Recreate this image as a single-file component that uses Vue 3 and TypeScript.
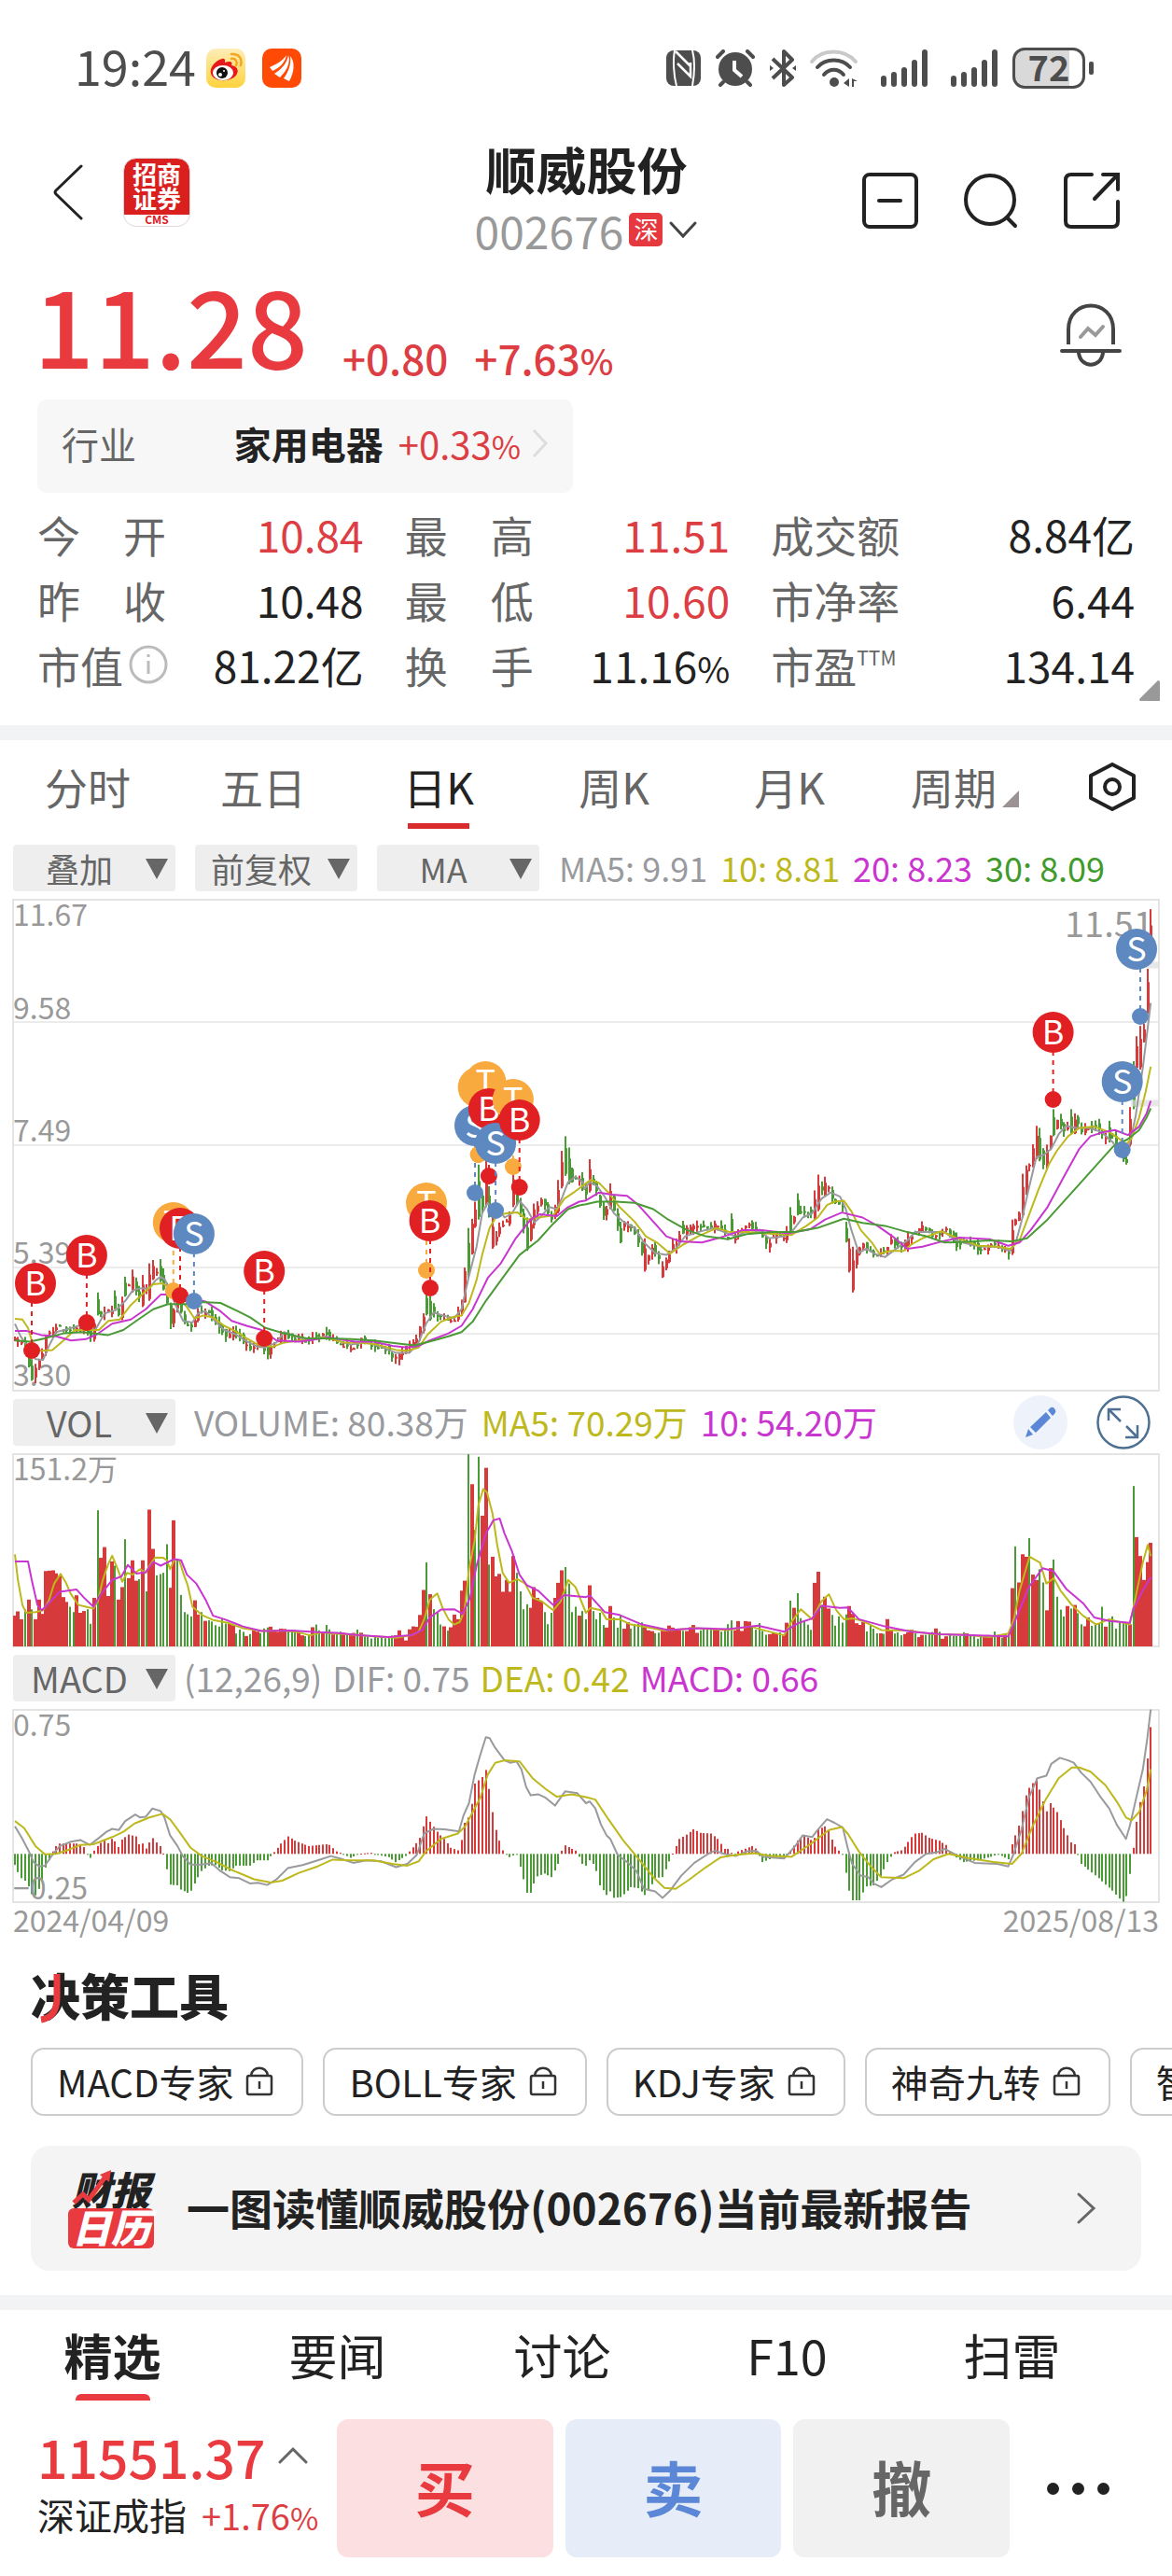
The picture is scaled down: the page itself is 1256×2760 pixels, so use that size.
<script setup lang="ts">
interface Point { x: number; y: number }
interface Bar { x: number; y: number; h: number; up: boolean }
interface Pin { kind: 'B' | 'S' | 'T'; x: number; y: number; dx: number; dy: number }

const COUNT = 329
const HALF = 1568
const GRID = 3136 / 1256
const FIRST = 39
const STEP = 3040 / 328

const colors = {
  gray: '#999a9e', yellow: '#bdb81c', magenta: '#c936cf', green: '#4a9a35', red: '#d63a3a',
}
const pinColors = { B: '#e02022', S: '#5d88c0', T: '#f9aa3f' }

/* Samples come as "x,y" pairs in two pages; the second page starts at HALF. */
function read(first: string, second: string): Point[] {
  const page = (s: string, shift: number) => s.trim().split(/\s+/).map((pair) => {
    const [x, y] = pair.split(',').map(Number)
    return { x: x + shift, y }
  })
  return [...page(first, 0), ...page(second, HALF)]
}
const px = (gx: number) => Math.round((gx / GRID - 14) * 10) / 10
const indexOf = (gx: number) => Math.max(0, Math.min(COUNT - 1, Math.round((gx - FIRST) / STEP)))

function perCandle(points: Point[]): number[] {
  const keys = points.map((p) => ({ i: indexOf(p.x), y: p.y }))
  const out: number[] = []
  let k = 0
  for (let i = 0; i < COUNT; i++) {
    while (k < keys.length - 2 && keys[k + 1].i <= i) k++
    const a = keys[k]
    const b = keys[k + 1]
    const t = b.i === a.i ? 1 : Math.max(0, Math.min(1, (i - a.i) / (b.i - a.i)))
    out.push(a.y + (b.y - a.y) * t)
  }
  return out
}
const noise = (i: number, seed: number) => {
  const v = Math.sin(i * 12.9898 + seed * 78.233) * 43758.5453
  return v - Math.floor(v)
}
/* Whole pixels keep the thin bars crisp. */
const candleX = (i: number) => Math.round(px(FIRST + i * STEP))

const priceY = (gy: number) => gy / 2.24 - 164
const volY = (gy: number) => gy / 2.6133 - 68
const macdY = (gy: number) => gy / 2.6133 - 342

function line(points: Point[], toY: (y: number) => number): string {
  return points.map((p) => `${px(p.x)},${toY(p.y).toFixed(1)}`).join(' ')
}

/* ---- price panel ---- */
const price = perCandle(read(
  '39,1425 60,1430 78,1470 87,1510 95,1490 112,1455 125,1415 150,1390 175,1400 205,1390 225,1395 245,1420 260,1360 285,1355 305,1350 318,1370 330,1330 340,1295 355,1290 375,1320 390,1300 405,1255 425,1265 440,1290 460,1380 475,1330 495,1380 512,1395 530,1360 555,1355 580,1380 605,1412 630,1405 655,1430 672,1445 690,1430 715,1455 735,1430 760,1410 790,1425 830,1420 870,1408 900,1430 940,1445 965,1425 1000,1435 1035,1445 1060,1470 1085,1440 1110,1425 1130,1370 1145,1320 1155,1350 1180,1370 1215,1378 1232,1340 1245,1260 1255,1210 1265,1150 1275,1060 1290,1110 1300,1040 1320,1190 1340,1155 1365,1130 1378,1070 1395,1120 1415,1190 1430,1110 1450,1090 1475,1130 1490,1080 1502,1030 1515,990 1530,1040 1550,1040 1567,1070',
  '10,1030 30,1070 48,1130 65,1080 80,1150 105,1145 125,1155 155,1230 180,1200 205,1250 230,1200 260,1165 290,1150 340,1148 370,1170 400,1180 435,1145 460,1165 480,1195 510,1165 530,1180 550,1140 570,1115 610,1115 625,1060 645,1060 660,1090 685,1105 697,1160 712,1250 725,1210 745,1195 770,1225 800,1210 815,1185 845,1205 870,1170 900,1155 925,1175 960,1160 990,1195 1020,1185 1050,1205 1100,1195 1130,1220 1142,1150 1160,1120 1175,1010 1190,1000 1205,940 1225,1005 1240,930 1260,890 1280,920 1305,895 1330,920 1365,910 1385,935 1405,930 1430,980 1443,1000 1452,900 1465,800 1480,740 1492,690 1501,560 1511,430',
))
const extremes: [number, number, number, boolean][] = [
  [78, 1440, 1490, false], [87, 1470, 1522, false], [262, 1310, 1365, false], [308, 1305, 1350, false], [337, 1272, 1320, false],
  [355, 1255, 1310, true], [382, 1268, 1345, true], [400, 1240, 1330, true], [410, 1232, 1280, true], [429, 1230, 1285, false],
  [438, 1252, 1305, false], [1142, 1305, 1365, false], [1152, 1310, 1378, false], [1253, 1155, 1275, false],
  [1271, 1092, 1155, true], [1280, 1003, 1135, false], [1299, 990, 1105, true], [1308, 1055, 1130, false],
  [1318, 1130, 1205, true], [1373, 1010, 1105, true], [1410, 1130, 1210, false], [1494, 1040, 1120, true],
  [1503, 970, 1060, true], [1513, 935, 1030, false], [1522, 962, 1050, false], [1578, 990, 1070, true],
  [1633, 1048, 1110, true], [1661, 1140, 1192, false], [1725, 1180, 1260, true], [1773, 1235, 1275, true],
  [1828, 1138, 1170, false], [1958, 1120, 1165, false], [2115, 1105, 1170, false], [2133, 1072, 1125, false],
  [2179, 1065, 1135, true], [2189, 1027, 1115, true], [2208, 1032, 1080, true], [2264, 1140, 1190, false], [2273, 1180, 1262, true],
  [2282, 1200, 1310, true], [2708, 1135, 1220, true], [2736, 1025, 1130, true], [2773, 910, 990, true],
  [2782, 915, 995, false], [2818, 870, 935, false], [2866, 870, 930, false], [2875, 880, 930, true], [2968, 898, 950, false],
  [3023, 865, 960, true], [3033, 755, 870, false], [3042, 695, 775, true], [3051, 670, 775, true],
  [3060, 665, 710, true], [3070, 533, 640, true], [3079, 390, 520, true],
]
const fixed = new Map(extremes.map((e) => [indexOf(e[0]), e]))
const candles = price.map((p, i) => {
  const pinned = fixed.get(i)
  const before = i ? price[i - 1] : p + 4
  const drift = (noise(i, 1) - 0.5) * 16
  let open = before + drift
  let close = p + (noise(i, 2) - 0.5) * 12
  let high = Math.min(open, close) - noise(i, 3) * 14
  let low = Math.max(open, close) + noise(i, 4) * 14
  let up = close < open
  if (pinned) {
    high = pinned[1]
    low = pinned[2]
    up = pinned[3]
    const span = low - high
    open = high + span * 0.3
    close = high + span * 0.95
  }
  const top = Math.min(open, close)
  const body = Math.max(4, Math.abs(open - close))
  return {
    x: candleX(i), high: priceY(high), low: priceY(low), top: priceY(top), body: body / 2.24, up,
  }
})

const priceLines = [
  { color: colors.gray, points: line(read(
    '40,1385 55,1415 75,1440 95,1470 115,1472 130,1440 150,1405 180,1398 210,1390 235,1395 255,1400 280,1360 310,1352 335,1330 355,1305 375,1300 400,1300 415,1282 430,1272 442,1280 455,1310 470,1340 490,1378 515,1382 530,1360 550,1355 575,1378 600,1400 630,1410 655,1425 690,1440 710,1442 740,1430 760,1405 790,1415 830,1425 870,1415 900,1425 940,1435 980,1430 1020,1440 1060,1455 1095,1455 1120,1430 1140,1385 1160,1358 1185,1365 1215,1372 1235,1350 1255,1270 1275,1200 1290,1120 1305,1095 1320,1110 1335,1110 1350,1130 1370,1120 1390,1090 1410,1110 1430,1142 1450,1125 1470,1105 1490,1110 1505,1080 1520,1045 1540,1032 1560,1045',
    '-5,1062 10,1045 30,1055 50,1080 75,1120 100,1140 130,1155 155,1190 185,1215 215,1220 240,1205 265,1175 300,1165 340,1155 370,1165 400,1175 440,1160 470,1165 490,1180 530,1175 550,1165 580,1130 605,1120 630,1085 655,1070 680,1080 695,1110 710,1160 730,1215 750,1205 775,1218 800,1225 830,1205 860,1185 880,1165 920,1165 960,1165 990,1185 1030,1195 1060,1200 1100,1200 1135,1210 1150,1190 1165,1140 1185,1060 1205,985 1225,980 1245,965 1265,930 1285,910 1310,915 1345,915 1380,925 1410,950 1430,975 1445,980 1455,950 1470,890 1490,770 1511,615'), priceY) },
  { color: colors.yellow, points: line(read(
    '40,1373 60,1375 75,1395 90,1440 110,1450 140,1448 170,1425 200,1400 240,1400 265,1400 290,1378 320,1375 350,1340 380,1315 410,1290 435,1288 455,1300 475,1320 500,1345 520,1372 545,1365 570,1370 600,1390 630,1403 660,1420 690,1435 730,1440 760,1430 800,1425 870,1418 920,1430 960,1430 1010,1435 1060,1448 1090,1450 1120,1442 1145,1410 1180,1380 1215,1368 1235,1365 1255,1335 1275,1280 1290,1220 1310,1155 1330,1125 1355,1120 1385,1118 1410,1135 1440,1130 1480,1125 1510,1085 1535,1070',
    '0,1048 12,1040 35,1047 60,1070 90,1105 130,1140 160,1175 190,1190 225,1217 260,1195 300,1175 350,1155 385,1165 430,1165 480,1168 550,1172 590,1150 620,1130 645,1100 665,1092 690,1090 710,1115 735,1160 765,1190 785,1217 815,1210 850,1210 870,1195 900,1180 950,1163 990,1178 1050,1198 1100,1200 1135,1205 1160,1185 1185,1125 1210,1065 1240,1000 1260,970 1290,935 1320,915 1360,912 1400,925 1425,940 1445,955 1460,940 1480,890 1497,830 1511,768'), priceY) },
  { color: colors.magenta, points: line(read(
    '40,1402 70,1402 110,1412 150,1415 190,1425 230,1422 260,1410 300,1385 350,1375 390,1350 430,1315 470,1315 510,1325 550,1332 590,1355 620,1378 660,1390 700,1400 740,1425 800,1428 880,1418 950,1428 1000,1428 1050,1438 1090,1442 1120,1438 1150,1425 1200,1408 1235,1390 1265,1350 1305,1275 1340,1240 1380,1180 1420,1135 1445,1122 1490,1127 1520,1105 1550,1092',
    '0,1089 35,1070 70,1075 110,1078 140,1100 180,1140 215,1175 250,1187 310,1190 360,1178 420,1160 470,1160 540,1168 600,1158 640,1135 685,1118 740,1130 780,1150 820,1175 860,1205 900,1200 950,1188 1000,1178 1080,1182 1130,1198 1160,1190 1190,1160 1235,1105 1280,1030 1320,965 1350,935 1385,925 1415,920 1450,932 1480,912 1500,880 1511,850'), priceY) },
  { color: colors.green, points: line(read(
    '40,1425 80,1428 120,1420 170,1408 220,1405 290,1412 330,1400 370,1375 410,1350 450,1338 500,1338 540,1333 590,1335 630,1352 670,1370 710,1395 760,1408 820,1420 880,1420 940,1422 1000,1425 1060,1432 1110,1437 1160,1425 1200,1415 1235,1405 1265,1380 1300,1330 1345,1275 1390,1220 1440,1185 1480,1145 1520,1110 1550,1101',
    '0,1098 30,1092 80,1092 130,1095 180,1110 220,1135 270,1160 320,1175 380,1182 430,1170 500,1165 560,1165 620,1155 690,1133 740,1143 800,1150 860,1165 910,1175 960,1190 1020,1188 1080,1185 1140,1187 1180,1180 1235,1135 1300,1070 1350,1020 1410,960 1450,942 1480,920 1500,890 1511,868'), priceY) },
]

const rawPins: [Pin['kind'], number, number, number, number][] = [
  ['B', 95, 1288, 85, 1450], ['B', 232, 1220, 232, 1382],
  ['T', 464, 1143, 464, 1305], ['B', 482, 1156, 482, 1317], ['S', 519, 1169, 519, 1331],
  ['B', 707, 1259, 707, 1421], ['T', 1141, 1096, 1141, 1257], ['B', 1150, 1138, 1151, 1300],
  ['S', 1271, 910, 1271, 1071], ['T', 1280, 817, 1280, 978], ['T', 1299, 805, 1280, 978],
  ['B', 1308, 870, 1308, 1030], ['T', 1373, 847, 1373, 1008], ['S', 1326, 952, 1326, 1113],
  ['B', 1390, 896, 1390, 1057], ['B', 2818, 685, 2818, 846], ['S', 3003, 804, 3003, 967],
  ['S', 3041, 486, 3051, 647],
]
const pins: Pin[] = rawPins.map(([kind, x, y, dx, dy]) => ({
  kind, x: px(x), y: Math.round(priceY(y)), dx: px(dx), dy: Math.round(priceY(dy)),
}))
const priceTicks = [
  { text: '11.67', y: 28 }, { text: '9.58', y: 128 }, { text: '7.49', y: 259 },
  { text: '5.39', y: 390 }, { text: '3.30', y: 521 },
]

/* ---- volume panel ---- */
const volume = perCandle(read(
  '39,630 48,618 60,640 75,585 90,640 105,585 115,625 122,505 145,503 158,520 168,578 185,605 197,620 205,573 215,622 235,612 243,650 252,580 262,335 271,468 281,438 290,575 299,478 308,490 318,585 327,550 336,416 345,525 355,475 364,532 373,528 382,475 391,562 400,333 410,443 420,517 438,510 447,430 456,552 465,363 475,470 484,572 494,620 512,632 521,587 530,627 540,620 550,645 565,645 585,665 595,640 605,655 625,660 635,678 645,665 660,682 675,672 700,675 725,662 740,678 753,662 780,668 800,678 820,690 845,655 860,680 873,657 890,680 915,678 940,688 957,665 975,688 1010,692 1050,690 1067,675 1085,698 1095,672 1105,657 1115,665 1124,628 1133,558 1142,481 1152,570 1161,612 1171,622 1180,655 1198,668 1207,660 1216,627 1225,640 1234,560 1243,532 1253,178 1262,262 1271,390 1280,185 1290,350 1299,216 1308,487 1318,465 1327,520 1336,513 1345,563 1355,530 1364,563 1373,463 1383,510 1392,562 1401,612 1410,598 1420,608 1429,550 1438,580 1448,590 1457,620 1466,653 1475,622 1485,580 1494,538 1503,503 1513,494 1522,540 1531,620 1541,605 1550,630 1559,617',
  '0,640 10,545 19,617 28,640 38,622 47,653 56,665 65,603 75,635 84,665 93,628 102,668 111,645 120,663 150,650 165,670 185,680 205,668 230,660 245,668 270,678 288,655 300,680 325,660 350,668 375,672 389,643 398,670 408,648 417,668 427,643 436,645 450,668 463,655 475,672 495,685 510,675 528,685 538,652 547,588 556,608 565,567 575,637 585,645 594,660 602,665 611,538 621,507 630,600 640,577 649,610 658,628 667,660 677,632 690,650 704,603 714,625 723,650 732,660 741,648 752,670 760,655 775,675 795,680 806,642 815,670 845,685 870,668 890,685 915,680 937,670 955,690 975,680 1000,690 1010,675 1030,680 1050,692 1070,692 1095,678 1110,690 1131,680 1140,553 1150,436 1159,537 1168,458 1177,465 1187,413 1196,515 1205,530 1215,500 1224,537 1233,615 1242,497 1252,473 1261,577 1270,613 1279,632 1289,603 1298,610 1307,600 1316,623 1326,655 1335,660 1344,635 1353,655 1372,655 1381,605 1390,658 1400,645 1409,632 1418,665 1430,652 1455,655 1465,267 1474,410 1483,463 1492,530 1501,480 1511,426',
))
const falling = new Set([
  262, 308, 336, 373, 391, 420, 429, 438, 447, 475, 484, 1142, 1253, 1271, 1280, 1308, 1383, 1392, 1401, 1410, 1513, 1522,
  1541, 1957, 2115, 2133, 2717, 2755, 2783, 2792, 2820, 2829, 2949, 3033,
].map(indexOf))
const volumeBars: Bar[] = volume.map((v, i) => {
  const y = volY(v + (v > 640 ? noise(i, 5) * 10 - 5 : 0))
  const up = falling.has(i) ? false : v < 600 ? true : candles[i].up
  return { x: candleX(i), y, h: 206 - y, up }
})
const volumeLines = [
  { color: colors.yellow, points: line(read(
    '40,458 48,530 60,600 70,622 95,620 115,615 130,590 145,540 162,513 175,535 190,570 210,600 230,605 250,610 262,590 275,530 290,485 300,462 315,500 327,535 340,510 355,515 375,500 390,510 400,490 415,467 437,468 447,475 455,500 467,473 480,475 490,510 502,545 515,605 540,628 570,642 610,650 650,665 700,673 760,672 800,677 830,685 860,677 890,680 930,682 1000,688 1060,692 1100,685 1120,675 1135,640 1150,585 1170,568 1185,610 1200,640 1215,655 1230,648 1243,615 1255,500 1270,420 1280,320 1293,275 1303,285 1318,345 1330,430 1345,510 1362,538 1385,528 1405,540 1425,580 1450,590 1480,615 1500,590 1520,530 1540,550',
    '0,622 12,608 40,615 55,640 90,640 120,655 160,662 210,672 290,665 380,670 440,660 480,672 530,685 548,650 575,612 605,640 630,590 650,570 670,615 690,640 715,638 740,645 790,670 860,672 930,682 1010,683 1080,690 1130,680 1145,640 1160,560 1187,465 1215,482 1232,540 1252,525 1270,560 1300,600 1330,630 1365,655 1400,640 1455,655 1470,580 1490,480 1503,432 1511,463'), volY) },
  { color: colors.magenta, points: line(read(
    '40,478 75,478 85,530 100,600 112,615 135,590 160,563 205,557 225,580 250,605 270,570 300,530 325,520 342,488 365,512 390,508 410,480 430,490 465,472 485,475 500,515 525,540 550,585 570,630 600,640 650,660 700,673 780,672 850,676 900,678 960,685 1040,690 1100,685 1130,670 1150,635 1180,613 1215,612 1238,625 1258,580 1275,490 1300,400 1320,363 1337,358 1350,400 1370,450 1390,515 1410,545 1440,560 1480,600 1510,572',
    '0,578 10,573 50,620 90,628 150,655 220,670 300,665 380,668 460,658 530,675 570,650 605,638 630,602 680,608 700,607 730,640 800,660 870,675 950,682 1030,685 1130,688 1150,640 1185,550 1222,497 1250,505 1285,555 1330,595 1360,635 1400,645 1455,650 1465,610 1490,560 1511,522'), volY) },
]

/* ---- MACD panel ---- */
const ZERO = macdY(1297)
const histogram = perCandle(read(
  '39,1328 48,1348 57,1365 66,1372 75,1388 84,1410 94,1413 103,1395 112,1375 122,1335 131,1315 140,1290 149,1275 158,1268 210,1268 225,1278 234,1297 243,1308 252,1288 262,1275 280,1257 290,1267 299,1255 308,1262 318,1278 327,1257 345,1243 363,1248 373,1270 382,1268 391,1282 400,1265 410,1253 420,1265 429,1275 438,1296 447,1340 456,1383 475,1385 484,1397 503,1406 512,1400 521,1380 540,1345 560,1330 580,1328 595,1343 614,1345 632,1330 670,1330 690,1315 716,1315 735,1292 753,1268 771,1248 790,1260 810,1268 830,1275 873,1270 885,1272 905,1290 920,1298 938,1308 950,1304 960,1297 990,1294 1000,1298 1040,1306 1060,1320 1085,1303 1096,1290 1115,1267 1124,1252 1133,1220 1142,1192 1152,1207 1171,1235 1189,1255 1207,1280 1225,1287 1234,1258 1243,1210 1253,1195 1262,1157 1271,1100 1290,1082 1299,1062 1308,1115 1318,1180 1327,1230 1336,1260 1345,1287 1355,1299 1364,1306 1383,1297 1392,1333 1401,1368 1410,1406 1420,1406 1429,1380 1440,1360 1460,1352 1478,1362 1494,1325 1503,1288 1513,1273 1530,1283 1541,1288 1550,1305 1559,1325',
  '0,1330 10,1315 19,1325 28,1345 38,1385 56,1412 65,1402 75,1420 93,1418 102,1410 120,1390 140,1393 158,1412 177,1382 187,1365 205,1362 214,1340 223,1318 232,1296 242,1275 251,1255 270,1243 288,1228 307,1238 335,1240 353,1255 372,1283 382,1283 391,1294 400,1297 408,1290 445,1275 455,1282 464,1303 475,1320 500,1308 530,1308 547,1288 565,1260 585,1245 604,1258 612,1252 621,1228 640,1220 649,1232 658,1257 667,1277 677,1288 687,1298 696,1350 705,1400 714,1427 732,1427 741,1405 750,1388 770,1385 788,1360 806,1320 816,1305 825,1292 840,1287 853,1277 871,1250 880,1240 900,1238 920,1252 945,1260 963,1272 975,1290 990,1307 1010,1320 1045,1315 1085,1305 1105,1298 1131,1312 1140,1270 1150,1245 1159,1218 1168,1177 1177,1133 1187,1112 1205,1086 1215,1117 1224,1150 1233,1178 1242,1155 1261,1180 1279,1225 1298,1265 1307,1270 1316,1300 1330,1325 1372,1365 1390,1383 1409,1400 1427,1422 1437,1431 1446,1415 1455,1353 1465,1280 1474,1207 1483,1152 1492,1108 1501,1030 1511,942',
))
const macdBars: Bar[] = histogram.map((v, i) => {
  const y = macdY(v)
  return { x: candleX(i), y: Math.min(y, ZERO), h: Math.max(1, Math.abs(y - ZERO)), up: y < ZERO }
})
const macdLines = [
  { color: colors.gray, points: line(read(
    '40,1220 60,1255 75,1285 90,1320 105,1332 120,1330 140,1300 160,1275 190,1263 215,1258 240,1272 265,1252 285,1235 300,1227 318,1230 335,1205 362,1187 375,1195 390,1193 408,1170 430,1177 440,1195 455,1245 475,1275 490,1305 510,1327 540,1327 565,1322 590,1345 615,1362 640,1365 670,1380 690,1378 715,1384 740,1368 770,1337 810,1328 860,1312 885,1303 910,1310 945,1322 980,1315 1020,1318 1060,1334 1090,1325 1115,1300 1135,1240 1160,1227 1190,1228 1228,1234 1240,1190 1255,1155 1270,1075 1285,1020 1300,970 1310,973 1325,1000 1350,1035 1365,1042 1382,1038 1395,1060 1408,1110 1420,1133 1440,1130 1460,1140 1485,1162 1512,1122 1545,1127',
    '0,1155 10,1150 25,1170 40,1215 55,1245 65,1255 85,1300 110,1320 135,1345 155,1395 185,1402 205,1420 225,1400 255,1358 290,1322 330,1295 345,1288 370,1297 400,1303 430,1290 455,1288 475,1305 530,1310 560,1275 580,1245 605,1250 620,1230 645,1200 665,1210 687,1223 700,1280 712,1325 735,1358 755,1362 770,1380 790,1390 820,1368 850,1355 880,1320 910,1297 940,1292 960,1283 990,1300 1040,1322 1100,1325 1130,1332 1145,1295 1165,1230 1185,1140 1208,1085 1232,1078 1245,1045 1268,1028 1290,1035 1305,1042 1325,1070 1350,1095 1375,1135 1400,1170 1420,1215 1445,1255 1455,1220 1470,1150 1490,1060 1501,980 1511,893'), macdY) },
  { color: colors.yellow, points: line(read(
    '40,1205 65,1225 95,1275 120,1298 150,1297 185,1285 215,1272 250,1270 300,1250 330,1235 360,1212 400,1195 435,1185 455,1200 480,1235 510,1280 540,1303 580,1320 620,1342 680,1368 725,1377 755,1372 800,1350 850,1332 890,1313 940,1315 1000,1315 1050,1325 1090,1330 1120,1318 1140,1290 1180,1255 1225,1240 1245,1220 1265,1180 1285,1140 1305,1075 1325,1042 1350,1035 1390,1038 1425,1085 1460,1115 1490,1137 1530,1130',
    '0,1138 25,1145 60,1200 100,1260 140,1310 180,1362 210,1392 240,1395 275,1370 320,1335 360,1307 400,1300 450,1295 490,1302 550,1305 600,1270 650,1230 685,1222 700,1240 730,1290 760,1330 790,1362 850,1365 890,1345 930,1312 970,1297 1020,1308 1090,1320 1140,1325 1165,1297 1195,1220 1230,1145 1265,1085 1300,1055 1320,1055 1350,1067 1390,1105 1420,1150 1445,1195 1460,1203 1480,1180 1500,1120 1511,1060'), macdY) },
]

/* ---- lists ---- */
const stats = [
  { label: '今 开', value: '10.84', up: true }, { label: '最 高', value: '11.51', up: true }, { label: '成交额', value: '8.84亿' },
  { label: '昨 收', value: '10.48' }, { label: '最 低', value: '10.60', up: true }, { label: '市净率', value: '6.44' },
  { label: '市值', value: '81.22亿', info: true }, { label: '换 手', value: '11.16', unit: '%' }, { label: '市盈', value: '134.14', sup: 'TTM' },
]
const periods = ['分时', '五日', '日K', '周K', '月K', '周期']
const tools = ['MACD专家', 'BOLL专家', 'KDJ专家', '神奇九转', '智能盯盘']
const sections = ['精选', '要闻', '讨论', 'F10', '扫雷']
const overlays = ['叠加', '前复权', 'MA']
const maLegend = [
  { text: 'MA5: 9.91', color: colors.gray }, { text: '10: 8.81', color: colors.yellow },
  { text: '20: 8.23', color: colors.magenta }, { text: '30: 8.09', color: '#419a2c' },
]
const volLegend = [
  { text: 'VOLUME: 80.38万', color: colors.gray }, { text: 'MA5: 70.29万', color: colors.yellow },
  { text: '10: 54.20万', color: colors.magenta },
]
const macdLegend = [
  { text: '(12,26,9)', color: colors.gray }, { text: 'DIF: 0.75', color: colors.gray },
  { text: 'DEA: 0.42', color: colors.yellow }, { text: 'MACD: 0.66', color: colors.magenta },
]
</script>

<template>
  <div class="page">
    <div class="status">
      <span class="clock">19:24</span>
      <svg class="app-icon" width="42" height="42" viewBox="0 0 42 42">
        <defs><linearGradient id="wb" x1="0" y1="0" x2="0" y2="1"><stop offset="0" stop-color="#fdeeb8" /><stop offset="1" stop-color="#ffd23c" /></linearGradient></defs>
        <rect width="42" height="42" rx="10" fill="url(#wb)" />
        <path d="M5 27 C3 20 11 12 17 11 C21 10 20 14 20 15 C25 13 29 14 27 18 C33 19 35 23 33 27 C30 35 9 38 5 27Z" fill="#e61a1d" />
        <ellipse cx="18" cy="26" rx="11" ry="8" fill="#fff" /><circle cx="17" cy="26" r="6" fill="#111" />
        <circle cx="15" cy="28" r="2" fill="#fff" /><circle cx="19" cy="24" r="1" fill="#fff" />
        <path d="M27 6 C35 5 39 11 37 18 M27 11 C31 10 34 14 32 18" fill="none" stroke="#f5a623" stroke-width="2.5" stroke-linecap="round" />
      </svg>
      <svg class="app-icon second" width="42" height="42" viewBox="0 0 42 42">
        <rect width="42" height="42" rx="10" fill="#ff4a05" />
        <path d="M8 20 C15 17 22 13 26 7 C25 15 18 21 11 24Z M13 27 C21 22 27 15 28 7 C31 16 25 25 19 31Z M23 32 C29 24 31 16 30 8 C35 14 35 24 29 35Z" fill="#fff" />
      </svg>
      <span class="spacer"></span>
      <svg class="s-nfc" width="38" height="40" viewBox="0 0 38 40">
        <rect y="1" width="37" height="38" rx="8" fill="#4d4d4d" />
        <path d="M9 1 C7 12 8 28 11 39 M28 1 C31 12 30 28 28 39" stroke="#fff" stroke-width="2" fill="none" />
        <path d="M10 2 L26 18 M12 15 L26 29 V14" stroke="#fff" stroke-width="2.5" fill="none" />
      </svg>
      <svg class="s-alarm" width="42" height="40" viewBox="0 0 42 40" fill="none" stroke="#4d4d4d" stroke-width="4" stroke-linecap="round">
        <circle cx="21" cy="21" r="18" fill="#4d4d4d" stroke="none" />
        <path d="M2 8 L8 2 M40 8 L34 2 M8 35 L5 38 M34 35 L37 38" /><path d="M20 12 V22 L28 29" stroke="#fff" stroke-linecap="butt" />
      </svg>
      <svg class="s-bt" width="28" height="40" viewBox="0 0 28 40" fill="none" stroke="#4d4d4d" stroke-width="4" stroke-linejoin="round">
        <path d="M3 10 L24 30 L15 38 V2 L24 11 L3 31" /><path d="M0 17 L4 20 L0 23Z M28 17 L24 20 L28 23Z" fill="#4d4d4d" stroke="none" />
      </svg>
      <svg class="s-wifi" width="54" height="40" viewBox="0 0 54 40" fill="none" stroke="#4d4d4d" stroke-width="4" stroke-linecap="round">
        <path d="M3 13 C14 -1 38 -1 50 13" stroke="#c9c9c9" /><path d="M9 19 C18 9 35 9 44 19 M16 27 C22 20 31 20 37 27" />
        <circle cx="27" cy="35" r="5" fill="#4d4d4d" stroke="none" /><path d="M43 31 V40 L37 36Z M46 31 L52 34 H48 V40 H46Z" fill="#4d4d4d" stroke="none" />
      </svg>
      <svg v-for="n in 2" :key="n" class="s-signal" width="52" height="40" viewBox="0 0 52 40" stroke="#4d4d4d" stroke-width="6" stroke-linecap="round">
        <path d="M4 31 V37 M15 27 V37 M26 22 V37 M37 14 V37 M48 3 V37" />
      </svg>
      <span class="battery"><span class="level">72</span></span><span class="nub"></span>
    </div>

    <header class="header">
      <div class="left">
        <button class="plain" aria-label="返回">
          <svg width="32" height="62" viewBox="0 0 32 62" fill="none" stroke="#222" stroke-width="3" stroke-linecap="round" stroke-linejoin="round"><path d="M30 3 L3 29 Q1 31 3 33 L30 59" /></svg>
        </button>
        <div class="broker"><span>招商</span><span>证券</span><small>CMS</small></div>
      </div>
      <div class="title">
        <h1>顺威股份</h1>
        <button class="plain code">002676<span class="market">深</span>
          <svg width="32" height="20" viewBox="0 0 32 20" fill="none" stroke="#444" stroke-width="3" stroke-linecap="round"><path d="M3 3 L16 17 L29 3" /></svg>
        </button>
      </div>
      <div class="actions">
        <button class="plain" aria-label="移除自选"><svg width="60" height="60" viewBox="0 0 60 60" fill="none" stroke="#222" stroke-width="4" stroke-linecap="round"><rect x="2" y="2" width="56" height="56" rx="6" /><path d="M18 30 H41" /></svg></button>
        <button class="plain" aria-label="搜索"><svg width="60" height="60" viewBox="0 0 60 60" fill="none" stroke="#222" stroke-width="4" stroke-linecap="round"><circle cx="29" cy="29" r="26" /><path d="M47 48 L56 57" /></svg></button>
        <button class="plain" aria-label="分享"><svg width="60" height="60" viewBox="0 0 60 60" fill="none" stroke="#222" stroke-width="4" stroke-linecap="round"><path d="M30 2 H8 Q2 2 2 8 V52 Q2 58 8 58 H52 Q58 58 58 52 V31 M42 2 H58 V18 M57 3 L33 28" /></svg></button>
      </div>
    </header>

    <section class="quote">
      <div class="price-row">
        <strong class="price">11.28</strong>
        <span class="change">+0.80</span>
        <span class="change">+7.63<span class="unit">%</span></span>
        <button class="plain bell" aria-label="价格提醒"><svg width="68" height="68" viewBox="0 0 68 68" fill="none" stroke="#444" stroke-width="4" stroke-linecap="round">
          <path d="M10 44 V28 C10 -6 58 -6 58 28 V44" stroke-linecap="butt" /><path d="M3 51 H65 M21 53 C23 70 45 70 47 53" /><path d="M23 36 L31 27 L39 34 L47 25" stroke="#999" />
        </svg></button>
      </div>
      <a class="industry" href="#">
        <span class="muted">行业</span><b>家用电器</b><span class="gain">+0.33<span class="unit">%</span></span>
        <svg width="18" height="32" viewBox="0 0 18 32" fill="none" stroke="#ddd" stroke-width="3"><path d="M2 2 L15 16 L2 30" /></svg>
      </a>
      <dl class="stats">
        <div v-for="s in stats" :key="s.label">
          <dt :class="{ compact: s.info || s.sup }">{{ s.label }}<sup v-if="s.sup">{{ s.sup }}</sup>
            <svg v-if="s.info" class="info" width="42" height="42" viewBox="0 0 42 42" fill="none" stroke="#bbb" stroke-width="3"><circle cx="21" cy="21" r="19" /><path d="M21 17 V31 M21 10 V13" /></svg>
          </dt>
          <dd :class="{ gain: s.up }">{{ s.value }}<span v-if="s.unit" class="unit">{{ s.unit }}</span></dd>
        </div>
      </dl>
      <svg class="corner" width="22" height="22" viewBox="0 0 22 22"><path d="M20 0 Q22 0 22 2 V22 H1 Q-1 21 1 19Z" fill="#999" /></svg>
    </section>
    <div class="band"></div>

    <nav class="periods">
      <button v-for="p in periods" :key="p" class="plain" :class="{ active: p === '日K' }">{{ p }}<svg v-if="p === '周期'" width="18" height="18" viewBox="0 0 18 18"><path d="M18 0 V18 H0Z" fill="#9b9393" /></svg></button>
      <button class="plain settings" aria-label="图表设置"><svg width="50" height="52" viewBox="0 0 50 52" fill="none" stroke="#222" stroke-width="4" stroke-linejoin="round"><path d="M25 2 L48 14 V38 L25 50 L2 38 V14Z" /><circle cx="25" cy="26" r="8" /></svg></button>
    </nav>

    <section class="charts">
      <div class="tools">
        <span v-for="o in overlays" :key="o" class="picker wide">
          <select :aria-label="o"><option>{{ o }}</option></select><svg width="24" height="22" viewBox="0 0 24 22"><path d="M0 0 H24 L12 22Z" fill="#666" /></svg>
        </span>
        <p class="legend"><span v-for="l in maLegend" :key="l.text" :style="{ color: l.color }">{{ l.text }}</span></p>
      </div>
      <svg class="chart" viewBox="0 0 1228 526">
        <g stroke="#d8d8d8"><path d="M0 131 H1228 M0 263 H1228 M0 394 H1228 M0 465 H1228" /></g>
        <rect width="1228" height="526" fill="none" stroke="#e4e4e4" stroke-width="2" />
        <g class="tick"><text v-for="t in priceTicks" :key="t.text" x="0" :y="t.y">{{ t.text }}</text></g>
        <text class="peak" x="1127" y="40">11.51</text>
        <g v-for="(c, i) in candles" :key="i" :fill="c.up ? colors.red : colors.green">
          <rect :x="c.x - 1" :y="c.high" width="2" :height="c.low - c.high" /><rect :x="c.x - 1" :y="c.top" width="3" :height="c.body" />
        </g>
        <path d="M1214 70 H1228 M1198 218 H1228" stroke="#ddd" stroke-opacity="0.7" stroke-width="7" />
        <polyline v-for="l in priceLines" :key="l.color" :points="l.points" fill="none" :stroke="l.color" stroke-width="2" stroke-linejoin="round" />
        <g v-for="(p, i) in pins" :key="'d' + i" :stroke="pinColors[p.kind]" :fill="pinColors[p.kind]">
          <circle :cx="p.dx" :cy="p.dy" r="9" stroke="none" /><path :d="`M${p.dx} ${p.y} V${p.dy}`" stroke-width="2" stroke-dasharray="5 5" />
        </g>
        <g v-for="(p, i) in pins" :key="'p' + i" class="pin">
          <circle :cx="p.x" :cy="p.y" r="22" :fill="pinColors[p.kind]" /><text :x="p.x" :y="p.y + 13">{{ p.kind }}</text>
        </g>
      </svg>

      <div class="tools">
        <span class="picker"><select class="latin" aria-label="指标一"><option>VOL</option></select><svg width="24" height="22" viewBox="0 0 24 22"><path d="M0 0 H24 L12 22Z" fill="#666" /></svg></span>
        <p class="legend wide-text"><span v-for="l in volLegend" :key="l.text" :style="{ color: l.color }">{{ l.text }}</span></p>
        <button class="plain draw" aria-label="画线"><svg width="58" height="58" viewBox="0 0 58 58"><circle cx="29" cy="29" r="29" fill="#edf2fb" /><path d="M13 45 L16 36 L21 42Z M18 34 L35 18 L40 24 L24 40Z M37 16 L40 13 Q42 12 44 14 L45 16 Q46 18 44 20 L42 22Z" fill="#5b87d6" /></svg></button>
        <button class="plain" aria-label="全屏"><svg width="58" height="58" viewBox="0 0 58 58" fill="none" stroke="#4d7092" stroke-width="2.5"><circle cx="29" cy="29" r="27.5" /><path d="M13 27 V15 H26 M13 15 L26 28 M32 33 L44 45 M31 45 H44 V32" /></svg></button>
      </div>
      <svg class="chart" viewBox="0 0 1228 206">
        <rect width="1228" height="206" fill="none" stroke="#e4e4e4" stroke-width="2" />
        <text class="tick" x="0" y="28">151.2万</text>
        <rect v-for="(b, i) in volumeBars" :key="i" :x="b.x - (b.up ? 2 : 1)" :y="b.y" :width="b.up ? 4 : 2" :height="b.h" :fill="b.up ? colors.red : colors.green" />
        <polyline v-for="l in volumeLines" :key="l.color" :points="l.points" fill="none" :stroke="l.color" stroke-width="2" stroke-linejoin="round" />
      </svg>

      <div class="tools">
        <span class="picker"><select class="latin" aria-label="指标二"><option>MACD</option></select><svg width="24" height="22" viewBox="0 0 24 22"><path d="M0 0 H24 L12 22Z" fill="#666" /></svg></span>
        <p class="legend wide-text macd"><span v-for="l in macdLegend" :key="l.text" :style="{ color: l.color }">{{ l.text }}</span></p>
      </div>
      <svg class="chart" viewBox="0 0 1228 206">
        <rect width="1228" height="206" fill="none" stroke="#e4e4e4" stroke-width="2" />
        <rect v-for="(b, i) in macdBars" :key="i" :x="b.x - 1" :y="b.y" width="2" :height="b.h" :fill="b.up ? colors.red : colors.green" />
        <polyline v-for="l in macdLines" :key="l.color" :points="l.points" fill="none" :stroke="l.color" stroke-width="2" stroke-linejoin="round" />
        <g class="tick"><text x="0" y="28">0.75</text><text x="0" y="203">−0.25</text></g>
      </svg>
      <div class="dates"><span>2024/04/09</span><span>2025/08/13</span></div>
    </section>

    <section class="decision">
      <h2>决策工具<svg class="stroke" width="34" height="56" viewBox="0 0 34 56" fill="none" stroke="#e83a3f" stroke-width="7"><path d="M28 3 V28 C28 42 23 50 11 52" /></svg></h2>
      <div class="chips">
        <button v-for="t in tools" :key="t">{{ t }}<svg width="30" height="32" viewBox="0 0 30 32" fill="none" stroke="#333" stroke-width="2.5"><rect x="2" y="10" width="26" height="20" rx="2" /><path d="M6 10 C7 -1 23 -1 24 10 M15 16 V24" /></svg></button>
      </div>
      <a class="report" href="#">
        <span class="calendar"><b>财报</b><b class="solid">日历</b>
          <svg class="trend" width="48" height="40" viewBox="0 0 48 40" fill="none" stroke="#e83a3f" stroke-width="5"><path d="M4 36 L14 27 L20 33 L38 8" /><path d="M32 6 L44 1 L42 14Z" fill="#e83a3f" stroke="none" /></svg>
        </span>
        <b class="headline">一图读懂顺威股份(002676)当前最新报告</b>
        <svg width="22" height="36" viewBox="0 0 22 36" fill="none" stroke="#666" stroke-width="3" stroke-linecap="round"><path d="M3 3 L19 18 L3 33" /></svg>
      </a>
    </section>
    <div class="band"></div>

    <nav class="sections">
      <button v-for="s in sections" :key="s" class="plain" :class="{ active: s === '精选' }">{{ s }}</button>
    </nav>

    <footer class="trade">
      <div class="index">
        <button class="plain index-value">11551.37<svg width="32" height="20" viewBox="0 0 32 20" fill="none" stroke="#666" stroke-width="3" stroke-linecap="round"><path d="M2 17 L16 3 L30 17" /></svg></button>
        <p>深证成指<span class="gain">+1.76<span class="unit">%</span></span></p>
      </div>
      <div class="orders">
        <button class="buy">买</button><button class="sell">卖</button><button class="cancel">撤</button>
      </div>
      <button class="plain more" aria-label="更多"><i></i><i></i><i></i></button>
    </footer>
  </div>
</template>

<style>
body { margin: 0; background: #fff; }
</style>

<style scoped>
.page {
  font-family: "Noto Sans CJK SC", "Noto Sans", sans-serif;
  color: #222;
  background: #fff;
  overflow: hidden;
}
.page * { box-sizing: border-box; }
svg { display: block; flex: none; }
h1, h2, p, dl, dd { margin: 0; font-weight: 400; }
button, select { font: inherit; color: inherit; }
a { color: inherit; text-decoration: none; }
.plain { border: 0; padding: 0; background: none; }
.gain { color: #dc3e43; }
.muted { color: #666; }
.spacer { flex: 1; }

.status { display: flex; align-items: center; height: 146px; padding: 0 84px 0 80px; }
.clock { font-size: 52px; line-height: 60px; color: #4d4d4d; margin-bottom: 6px; }
.app-icon { margin-left: 11px; }
.app-icon.second { margin-left: 18px; }
.s-nfc { margin-right: 15px; }
.s-alarm { margin-right: 16px; }
.s-bt { margin-right: 14px; }
.s-wifi { margin-right: 22px; }
.s-signal { margin-right: 23px; }
.s-signal + .battery { margin-left: -8px; }
.battery {
  width: 78px; height: 44px; border: 3px solid #4d4d4d; border-radius: 13px;
  background: linear-gradient(90deg, #d9d9d9 58px, #fff 58px);
}
.level { display: block; text-align: center; font-size: 38px; line-height: 34px; font-weight: 700; color: #4d4d4d; }
.nub { width: 5px; height: 14px; margin-left: 4px; border-radius: 2px; background: #4d4d4d; }

.header { display: flex; justify-content: space-between; height: 140px; padding: 0 56px 0 57px; }
.left, .actions { display: flex; align-items: center; flex: 1; }
.left { padding-bottom: 20px; }
.broker {
  display: flex; flex-direction: column; align-items: center; width: 72px; height: 74px; margin-left: 43px; padding-top: 3px;
  border: 1px solid #e3d5d5; border-radius: 14px; color: #fff; font-weight: 700; font-size: 26px; line-height: 26px;
  background: linear-gradient(#d9201f 60px, #fff 60px);
}
.broker small { margin-top: 3px; font-size: 12px; line-height: 14px; color: #d9201f; }
.title { display: flex; flex-direction: column; align-items: center; padding-top: 4px; }
h1 { font-size: 54px; line-height: 62px; font-weight: 700; }
.code { display: flex; align-items: center; margin-top: 6px; font-size: 48px; line-height: 56px; color: #999; }
.market {
  width: 36px; height: 36px; margin: 0 6px; border-radius: 5px; background: #e6393f; color: #fff; font-size: 26px; line-height: 34px; text-align: center;
}
.actions { justify-content: flex-end; gap: 48px; padding-bottom: 2px; }

.quote { position: relative; padding: 0 40px 30px; }
.price-row { display: flex; align-items: flex-end; margin-left: -4px; }
.price { font-size: 114px; line-height: 120px; font-weight: 500; color: #e83a3f; }
.change { font-size: 44px; line-height: 46px; font-weight: 500; color: #dc3e43; margin-left: 28px; }
.price + .change { margin-left: 37px; }
.unit { font-size: 38px; line-height: 38px; }
.bell { margin: 0 13px 13px auto; }
.industry {
  display: flex; align-items: center; width: 574px; height: 100px; margin-top: 22px; padding: 0 26px 6px; border-radius: 10px;
  background: #f7f7f7; font-size: 40px; line-height: 48px;
}
.industry b { margin-left: auto; }
.industry .gain { margin: 0 12px 0 16px; }
.industry .unit { font-size: 34px; }
.stats { display: grid; grid-template-columns: 349fr 348fr 389fr; column-gap: 44px; margin-top: 9px; font-size: 46px; line-height: 70px; }
.stats div { display: flex; justify-content: space-between; height: 70px; }
dt { display: block; flex: none; width: 138px; color: #666; text-align-last: justify; }
dt.compact { display: flex; align-items: center; text-align-last: left; white-space: nowrap; }
dd { white-space: nowrap; }
.info { margin-left: 6px; }
sup { font-size: 21px; line-height: 20px; margin-bottom: 16px; }
.corner { position: absolute; right: 13px; bottom: 26px; }
.band { height: 16px; background: #f1f3f5; }

.periods { display: flex; height: 95px; font-size: 46px; line-height: 62px; color: #666; }
.periods .plain { position: relative; display: flex; justify-content: center; align-items: flex-end; flex: 188; padding: 18px 0 15px; }
.periods .plain svg { margin: 0 0 8px 6px; }
.periods .active { color: #222; }
.periods .active::after {
  content: ""; position: absolute; left: 50%; bottom: 0; width: 66px; height: 6px; margin-left: -33px; background: #d92b2b;
}
.periods .settings { flex: 128; align-items: center; padding: 4px 0 0; }
.periods .settings svg { margin: 0; }

.charts { padding: 17px 14px 0; }
.tools { display: flex; align-items: center; height: 50px; margin-bottom: 9px; font-size: 36px; line-height: 50px; }
.chart { width: 100%; height: auto; margin-bottom: 9px; overflow: visible; }
.picker { position: relative; flex: 0 0 174px; height: 50px; border-radius: 4px; background: #eee; color: #666; }
.picker.wide { margin-right: 21px; }
.picker select {
  display: block; width: 100%; height: 50px; border: 0; padding: 0 32px 2px 0; appearance: none; background: none; text-align-last: center;
}
.picker .latin { font-size: 38px; padding-bottom: 4px; }
.picker svg { position: absolute; right: 8px; top: 15px; pointer-events: none; }
.legend { display: flex; gap: 14px; flex: 1; white-space: nowrap; padding-bottom: 2px; }
.legend.wide-text { font-size: 37px; padding-left: 20px; }
.legend.macd { gap: 11px; padding-left: 9px; }
.draw { margin-right: 31px; }
.tools > .plain:last-child { margin-right: 9px; }
.tick { font-size: 32px; fill: #999; }
.peak { font-size: 38px; fill: #999; }
.pin text { font-size: 36px; fill: #fff; text-anchor: middle; }
.dates { display: flex; justify-content: space-between; margin-top: -9px; font-size: 32px; line-height: 36px; color: #999; }

.decision { padding: 33px 33px 26px; }
h2 { position: relative; font-size: 53px; line-height: 60px; font-weight: 900; }
.stroke { position: absolute; left: 0; top: 5px; }
.chips { display: flex; gap: 21px; margin-top: 27px; }
.chips button {
  display: flex; align-items: center; flex: none; gap: 13px; height: 73px; padding: 0 30px 2px 26px; border: 2px solid #ccc; border-radius: 14px;
  background: #fff; font-size: 40px; line-height: 60px;
}
.report { display: flex; align-items: center; height: 134px; margin-top: 32px; padding: 0 48px 0 40px; border-radius: 20px; background: #f4f4f4; }
.calendar { position: relative; display: flex; flex-direction: column; width: 92px; text-align: center; font-size: 42px; line-height: 42px; font-style: italic; }
.calendar b { font-weight: 900; }
.calendar .solid { height: 43px; border-radius: 6px; background: #e83a3f; color: #fff; line-height: 38px; }
.trend { position: absolute; left: 2px; top: 0; }
.headline { flex: 1; margin-left: 35px; font-size: 46px; line-height: 60px; padding-bottom: 4px; }

.sections { display: flex; padding-right: 51px; font-size: 52px; line-height: 64px; }
.sections .plain { position: relative; flex: 1; padding: 16px 0 17px; }
.sections .active { font-weight: 700; }
.sections .active::after {
  content: ""; position: absolute; left: 50%; bottom: 0; width: 80px; height: 7px; margin-left: -40px; border-radius: 6px 6px 0 0; background: #e83a3f;
}

.trade { display: flex; padding: 20px 0; }
.index { flex: 0 0 361px; padding: 4px 0 0 40px; white-space: nowrap; }
.index-value { display: flex; align-items: center; gap: 14px; font-size: 57px; line-height: 70px; font-weight: 500; color: #e83a3f; }
.index p { font-size: 40px; line-height: 56px; }
.index p .gain { margin-left: 16px; font-size: 38px; }
.index .unit { font-size: 33px; }
.orders { display: flex; flex: 1; gap: 13px; }
.orders button { flex: 1; height: 148px; border: 0; border-radius: 12px; padding: 0 0 6px; font-size: 64px; line-height: 80px; font-weight: 700; }
.buy { background: #fce0e1; color: #e83a3f; }
.sell { background: #e6edf9; color: #5b87d6; }
.cancel { background: #f1f1f1; color: #666; }
.more { display: flex; flex: 0 0 174px; justify-content: center; align-items: center; gap: 14px; padding-right: 28px; }
.more i { width: 13px; height: 13px; border-radius: 50%; background: #222; }
</style>
